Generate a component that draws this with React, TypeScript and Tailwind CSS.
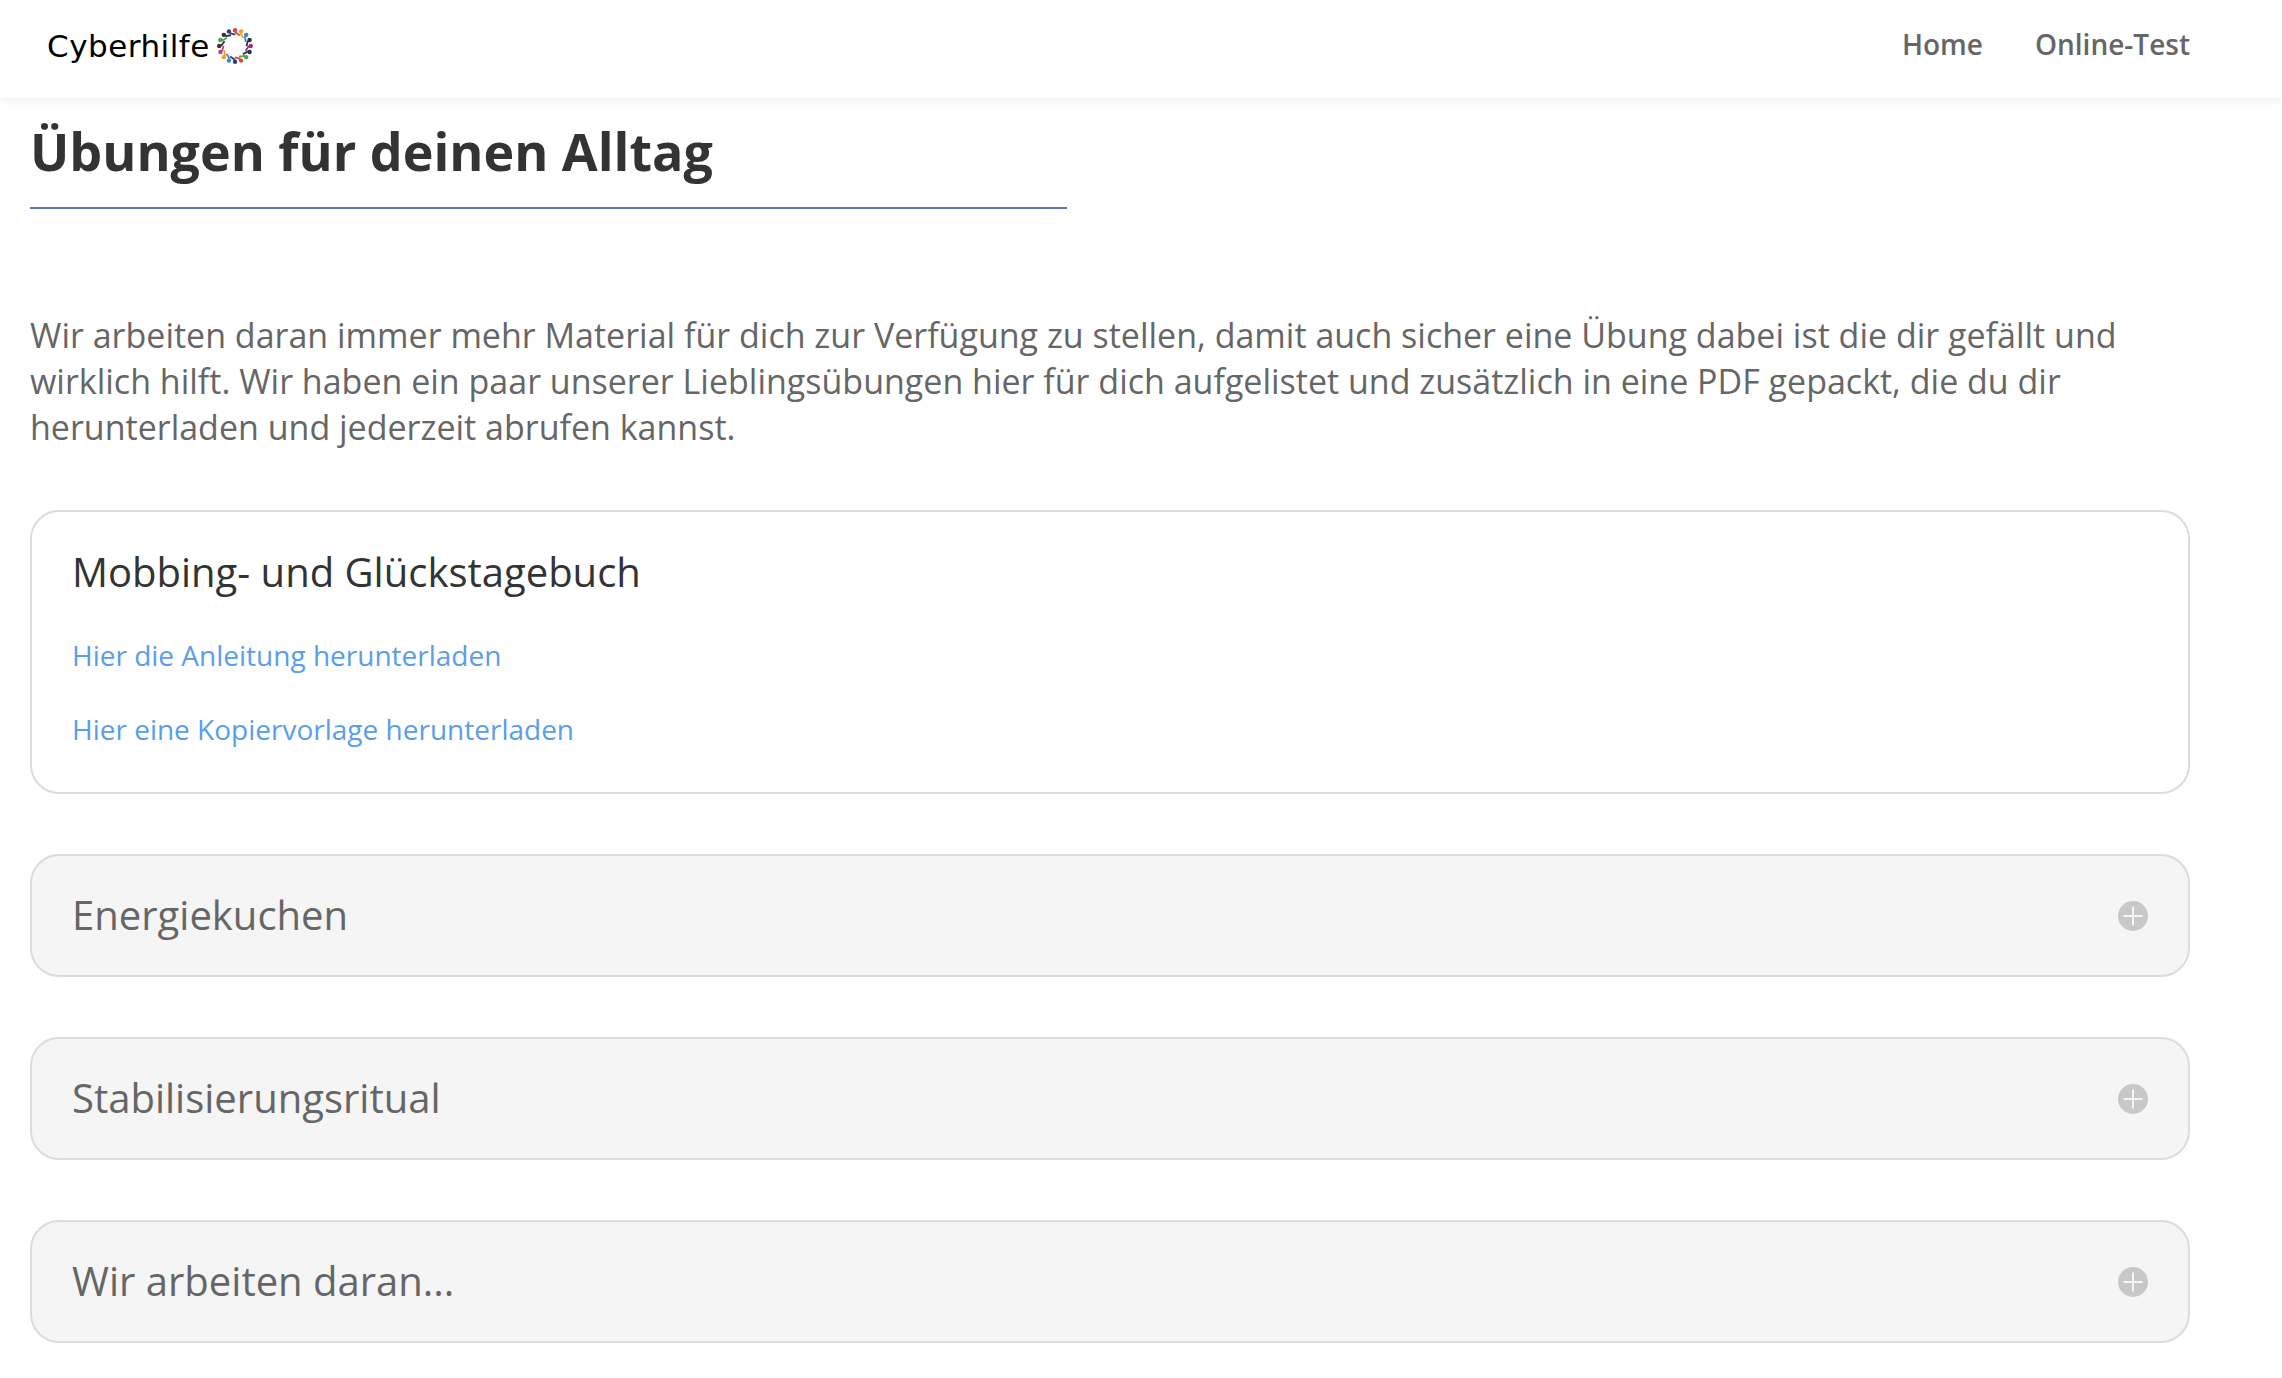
import { Plus } from 'lucide-react';

const font = "[font-family:'Open_Sans',sans-serif]";

const ringColors = ['#e0453a', '#f0a030', '#3a86c8', '#2f2f3f', '#8e2f8a', '#2f2f3f', '#4aa84a', '#e0453a', '#2a3f80', '#3a86c8', '#f0a030', '#c2407a', '#2f2f3f', '#4aa84a', '#2f2f3f', '#2a3f80'];

function LogoRing() {
    return (
        <svg width="36" height="36" viewBox="-18 -18 36 36" className="shrink-0">
            {ringColors.map((c, i) => {
                const a = (i / ringColors.length) * Math.PI * 2 - Math.PI / 2;
                return (
                    <g key={i}>
                        <line x1={Math.cos(a) * 14} y1={Math.sin(a) * 14} x2={Math.cos(a + 0.42) * 11.5} y2={Math.sin(a + 0.42) * 11.5} stroke={c} strokeWidth="1.8" />
                        <circle cx={Math.cos(a) * 15.8} cy={Math.sin(a) * 15.8} r="2.2" fill={c} />
                    </g>
                );
            })}
        </svg>
    );
}

function Collapsed({ title }: { title: string }) {
    return (
        <div className="flex h-[123px] items-center justify-between rounded-[29px] border-2 border-[#dcdcdc] bg-[#f5f5f5] pl-[40px] pr-[40px]">
            <h3 className="mt-[-2px] text-[40px] text-[#666666]">{title}</h3>
            <div className="flex h-[30px] w-[30px] items-center justify-center rounded-full bg-[#c8c8c8]">
                <Plus className="h-[30px] w-[30px] text-[#f5f5f5]" strokeWidth={1.6} />
            </div>
        </div>
    );
}

export default function App() {
    return (
        <div className={`min-h-[1378px] bg-white antialiased ${font}`}>
            <nav className="flex h-[98px] items-center justify-between pb-[6px] pl-[47px] pr-[92px] shadow-[0_2px_8px_rgba(0,0,0,0.07)]">
                <div className="flex items-center gap-[7px]">
                    <span className="text-[31px] tracking-[0.5px] text-black [font-family:'DejaVu_Sans',sans-serif]">Cyberhilfe</span>
                    <LogoRing />
                </div>
                <div className="mb-[4px] flex items-center gap-[52px] text-[28px] font-semibold text-[#666666]">
                    <a>Home</a>
                    <a>Online-Test</a>
                </div>
            </nav>
            <main className="px-[30px] pr-[92px]">
                <h1 className="mt-[17px] w-[1037px] border-b-2 border-[#5f73b8] pb-[21px] text-[52px] leading-[71px] font-bold text-[#333333]">Übungen für deinen Alltag</h1>
                <p className="mt-[103px] text-[34px] leading-[46px] text-[#666666]">
                    Wir arbeiten daran immer mehr Material für dich zur Verfügung zu stellen, damit auch sicher eine Übung dabei ist die dir gefällt und wirklich hilft. Wir haben ein paar unserer Lieblingsübungen hier für dich aufgelistet und zusätzlich in eine PDF gepackt, die du dir herunterladen und jederzeit abrufen kannst.
                </p>
                <div className="mt-[60px] flex flex-col gap-[60px]">
                    <div className="h-[284px] rounded-[29px] border-2 border-[#dcdcdc] px-[40px] pt-[33px]">
                        <h3 className="text-[40px] leading-[54px] text-[#333333]">Mobbing- und Glückstagebuch</h3>
                        <div className="mt-[37px] flex flex-col gap-[36px] text-[28px] leading-[38px] text-[#5a9eea]">
                            <a>Hier die Anleitung herunterladen</a>
                            <a>Hier eine Kopiervorlage herunterladen</a>
                        </div>
                    </div>
                    <Collapsed title="Energiekuchen" />
                    <Collapsed title="Stabilisierungsritual" />
                    <Collapsed title="Wir arbeiten daran..." />
                </div>
            </main>
        </div>
    );
}
